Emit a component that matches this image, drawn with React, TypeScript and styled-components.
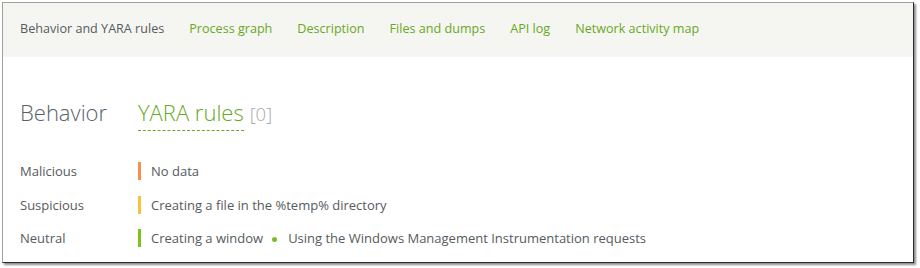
import React from "react";
import styled, { createGlobalStyle } from "styled-components";

const Global = createGlobalStyle`
  html, body { margin: 0; padding: 0; background: #ffffff; }
  body { font-family: "Open Sans", "Liberation Sans", sans-serif; }
`;

const Outer = styled.div`
  padding: 2px 0 0 2px;
  width: 920px;
  height: 268px;
  box-sizing: border-box;
`;

const Window = styled.div`
  width: 912px;
  height: 261px;
  box-sizing: border-box;
  border-left: 1px solid #a0a0a0;
  border-top: 1px solid #a0a0a0;
  border-right: 1px solid #2b2b2b;
  border-bottom: 1px solid #2b2b2b;
  box-shadow: 2px 2px 2px rgba(0, 0, 0, 0.45);
  background: #ffffff;
  display: flex;
  flex-direction: column;
`;

const Nav = styled.nav`
  height: 54px;
  background: #f5f6f1;
  display: flex;
  align-items: center;
  padding: 0 0 0 17px;
  gap: 25px;
`;

const NavItem = styled.span<{ $active?: boolean }>`
  font-size: 12.6px;
  color: ${(p) => (p.$active ? "#555b60" : "#69a824")};
  margin-bottom: 3px;
`;

const Body = styled.div`
  padding: 40px 0 0 17px;
  display: flex;
  flex-direction: column;
`;

const Heading = styled.div`
  display: flex;
  align-items: baseline;
  height: 46px;
`;

const Title = styled.span`
  font-size: 22px;
  font-weight: 300;
  color: #56626b;
  width: 118px;
`;

const TabLink = styled.span`
  font-size: 22px;
  font-weight: 300;
  color: #69a824;
  border-bottom: 1px dashed #69a824;
  line-height: 26px;
  padding-bottom: 5px;
`;

const Count = styled.span`
  font-size: 18.5px;
  font-weight: 300;
  color: #a8a8a8;
  margin-left: 6px;
`;

const Rows = styled.div`
  margin-top: 19px;
  display: flex;
  flex-direction: column;
  gap: 15.5px;
`;

const Row = styled.div`
  display: flex;
  align-items: center;
  height: 18px;
  font-size: 13px;
`;

const Label = styled.span`
  width: 118px;
  color: #555b60;
`;

const Bar = styled.span<{ $color: string }>`
  width: 3px;
  height: 18px;
  background: ${(p) => p.$color};
  margin-right: 10px;
`;

const Item = styled.span`
  color: #555b60;
`;

const Dot = styled.span`
  width: 5px;
  height: 5px;
  border-radius: 50%;
  background: #7cbb2b;
  margin: 2px 11px 0 9px;
`;

export default function App() {
  return (
    <>
      <Global />
      <Outer>
        <Window>
          <Nav>
            <NavItem $active>Behavior and YARA rules</NavItem>
            <NavItem>Process graph</NavItem>
            <NavItem>Description</NavItem>
            <NavItem>Files and dumps</NavItem>
            <NavItem>API log</NavItem>
            <NavItem>Network activity map</NavItem>
          </Nav>
          <Body>
            <Heading>
              <Title>Behavior</Title>
              <TabLink>YARA rules</TabLink>
              <Count>[0]</Count>
            </Heading>
            <Rows>
              <Row>
                <Label>Malicious</Label>
                <Bar $color="#fb8c4a" />
                <Item>No data</Item>
              </Row>
              <Row>
                <Label>Suspicious</Label>
                <Bar $color="#fbc03e" />
                <Item>Creating a file in the %temp% directory</Item>
              </Row>
              <Row>
                <Label>Neutral</Label>
                <Bar $color="#7cc31c" />
                <Item>Creating a window</Item>
                <Dot />
                <Item>Using the Windows Management Instrumentation requests</Item>
              </Row>
            </Rows>
          </Body>
        </Window>
      </Outer>
    </>
  );
}
